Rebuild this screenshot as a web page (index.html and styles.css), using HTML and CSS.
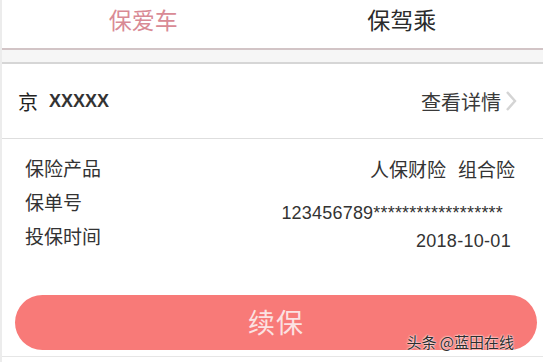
FILE: index.html
```html
<!DOCTYPE html>
<html lang="zh">
<head>
<meta charset="utf-8">
<link rel="stylesheet" href="styles.css">
</head>
<body>
<div class="page">
  <div class="tabs">
    <div class="tab tab-active">保爱车</div>
    <div class="tab tab-right">保驾乘</div>
  </div>
  <div class="band"></div>
  <div class="plate-row">
    <div class="plate"><span class="plate-city">京</span><span class="plate-no">XXXXX</span></div>
    <div class="detail">查看详情<svg class="chev" width="12" height="22" viewBox="0 0 12 22"><path d="M2 2 L10 11 L2 20" fill="none" stroke="#d4d4d4" stroke-width="2.4"/></svg></div>
  </div>
  <div class="info">
    <div class="labels">
      <div class="label">保险产品</div>
      <div class="label">保单号</div>
      <div class="label">投保时间</div>
    </div>
    <div class="values">
      <div class="value v1"><span>人保财险</span><span>组合险</span></div>
      <div class="value v2">123456789******************</div>
      <div class="value v3">2018-10-01</div>
    </div>
  </div>
  <div class="btn-wrap">
    <div class="btn">续保</div>
  </div>
  <div class="watermark">头条 @蓝田在线</div>
</div>
</body>
</html>
```

FILE: styles.css
```css
html, body {
  margin: 0;
  padding: 0;
  background: #ffffff;
}
body {
  font-family: "Noto Sans CJK SC", "Liberation Sans", sans-serif;
  color: #333333;
}
.page {
  position: relative;
  width: 543px;
  height: 362px;
  overflow: hidden;
  border-left: 2px solid #ececec;
  box-sizing: border-box;
}
.tabs {
  display: flex;
  height: 48px;
  border-bottom: 2px solid #d2c4c6;
  background: #ffffff;
}
.tab {
  flex: 1;
  display: flex;
  align-items: center;
  justify-content: center;
  font-size: 23px;
  line-height: 1;
  padding-bottom: 10px;
  color: #2b2b2b;
}
.tab-active {
  color: #d98a95;
  padding-left: 12px;
}
.tab-right {
  padding-right: 12px;
}
.band {
  height: 12px;
  background: #f6f6f6;
  border-bottom: 2px solid #d6d6d6;
}
.plate-row {
  display: flex;
  align-items: center;
  justify-content: space-between;
  height: 74px;
  padding: 0 26px 0 16px;
  border-bottom: 1px solid #dedede;
}
.plate {
  display: flex;
  align-items: center;
  gap: 11px;
  font-size: 20px;
  color: #222222;
}
.plate-no {
  font-family: "Liberation Sans", sans-serif;
  font-weight: bold;
  font-size: 18px;
  color: #333333;
}
.detail {
  display: flex;
  align-items: center;
  gap: 4px;
  font-size: 20px;
  color: #3a3a3a;
}
.chev {
  display: block;
}
.info {
  display: flex;
  justify-content: space-between;
  padding: 12px 28px 0 23px;
  height: 141px;
  box-sizing: border-box;
}
.labels {
  display: flex;
  flex-direction: column;
}
.label {
  font-size: 19px;
  line-height: 34px;
  color: #333333;
}
.values {
  display: flex;
  flex-direction: column;
  align-items: flex-end;
}
.value {
  font-size: 19px;
  line-height: 34px;
  color: #333333;
}
.v1 {
  display: flex;
  gap: 12px;
  margin-top: 1px;
}
.v2 {
  font-family: "Liberation Sans", sans-serif;
  font-size: 18px;
  line-height: 20px;
  margin-top: 17px;
  margin-right: 12px;
  letter-spacing: 0.2px;
}
.v3 {
  font-family: "Liberation Sans", sans-serif;
  font-size: 18px;
  line-height: 20px;
  margin-top: 8px;
  margin-right: 4px;
  letter-spacing: 0.3px;
}
.btn-wrap {
  padding: 15px 6px 0 13px;
  height: 77px;
  box-sizing: border-box;
  border-bottom: 1px solid #e6e6e6;
}
.btn {
  height: 55px;
  border-radius: 28px;
  background: #f87a78;
  color: #fbe2e2;
  font-size: 27px;
  padding-bottom: 2px;
  box-sizing: border-box;
  display: flex;
  align-items: center;
  justify-content: center;
  letter-spacing: 1px;
}
.watermark {
  position: absolute;
  right: 29px;
  top: 331px;
  font-size: 15px;
  color: #2e2e2e;
  text-shadow: 0 0 2px #ffffff, 0 0 2px #ffffff;
}
```
